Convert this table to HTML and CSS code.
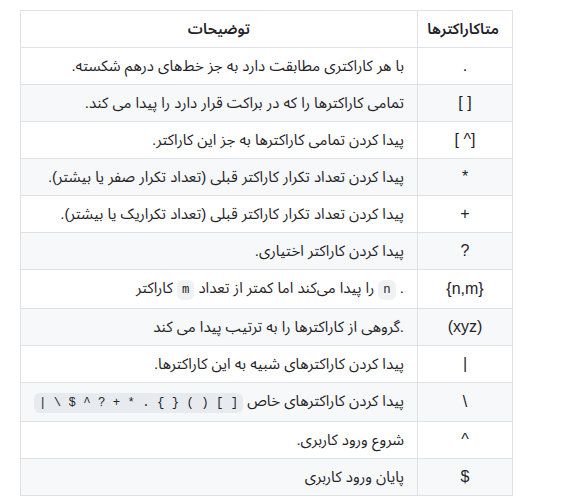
FILE: index.html
```html
<!DOCTYPE html>
<html lang="fa" dir="rtl">
<head>
    <meta charset="UTF-8">
    <title>متاکاراکترها</title>
    <link rel="stylesheet" href="styles.css">
</head>
<body>
    <div class="page">
        <table class="meta-table">
            <thead>
                <tr>
                    <th class="sym">متاکاراکترها</th>
                    <th>توضیحات</th>
                </tr>
            </thead>
            <tbody>
                <tr>
                    <td class="sym">.</td>
                    <td class="desc">با هر کاراکتری مطابقت دارد به جز خط‌های درهم شکسته.</td>
                </tr>
                <tr>
                    <td class="sym">[ ]</td>
                    <td class="desc">تمامی کاراکترها را که در براکت قرار دارد را پیدا می کند.</td>
                </tr>
                <tr>
                    <td class="sym">[^ ]</td>
                    <td class="desc">پیدا کردن تمامی کاراکترها به جز این کاراکتر.</td>
                </tr>
                <tr>
                    <td class="sym">*</td>
                    <td class="desc">پیدا کردن تعداد تکرار کاراکتر قبلی (تعداد تکرار صفر یا بیشتر).</td>
                </tr>
                <tr>
                    <td class="sym">+</td>
                    <td class="desc">پیدا کردن تعداد تکرار کاراکتر قبلی (تعداد تکراریک یا بیشتر).</td>
                </tr>
                <tr>
                    <td class="sym">?</td>
                    <td class="desc">پیدا کردن کاراکتر اختیاری.</td>
                </tr>
                <tr>
                    <td class="sym">{n,m}</td>
                    <td class="desc">. <code>n</code> را پیدا می‌کند اما کمتر از تعداد <code>m</code> کاراکتر</td>
                </tr>
                <tr>
                    <td class="sym">(xyz)</td>
                    <td class="desc">.گروهی از کاراکترها را به ترتیب پیدا می کند</td>
                </tr>
                <tr>
                    <td class="sym">|</td>
                    <td class="desc">پیدا کردن کاراکترهای شبیه به این کاراکترها.</td>
                </tr>
                <tr>
                    <td class="sym">\</td>
                    <td class="desc">پیدا کردن کاراکترهای خاص <code>[ ] ( ) { } . * + ? ^ $ \ |</code></td>
                </tr>
                <tr>
                    <td class="sym">^</td>
                    <td class="desc">شروع ورود کاربری.</td>
                </tr>
                <tr>
                    <td class="sym">$</td>
                    <td class="desc">پایان ورود کاربری</td>
                </tr>
            </tbody>
        </table>
    </div>
</body>
</html>
```

FILE: styles.css
```css
* {
    margin: 0;
    padding: 0;
    box-sizing: border-box;
}

body {
    font-family: "Liberation Sans", "Noto Sans Arabic", sans-serif;
    font-size: 16px;
    line-height: 24px;
    color: #1f2328;
    background: #ffffff;
}

.page {
    padding: 10px 64px 0 20px;
}

.meta-table {
    width: 493px;
    table-layout: fixed;
    border-collapse: collapse;
    border-spacing: 0;
}

.meta-table th,
.meta-table td {
    padding: 6px 13px;
    border: 1px solid #dfe2e5;
}

.meta-table th {
    font-size: 15px;
    font-weight: 600;
    text-align: center;
}

.meta-table th.sym,
.meta-table td.sym {
    width: 95px;
    text-align: center;
}

.meta-table td.desc {
    font-size: 15px;
    text-align: right;
}

.meta-table tbody tr:nth-child(2n) {
    background: #f6f8fa;
}

code {
    font-family: "Liberation Mono", monospace;
    font-size: 82%;
    padding: 0.25em 0.4em;
    background: rgba(175, 184, 193, 0.2);
    border-radius: 6px;
    white-space: nowrap;
}
```
